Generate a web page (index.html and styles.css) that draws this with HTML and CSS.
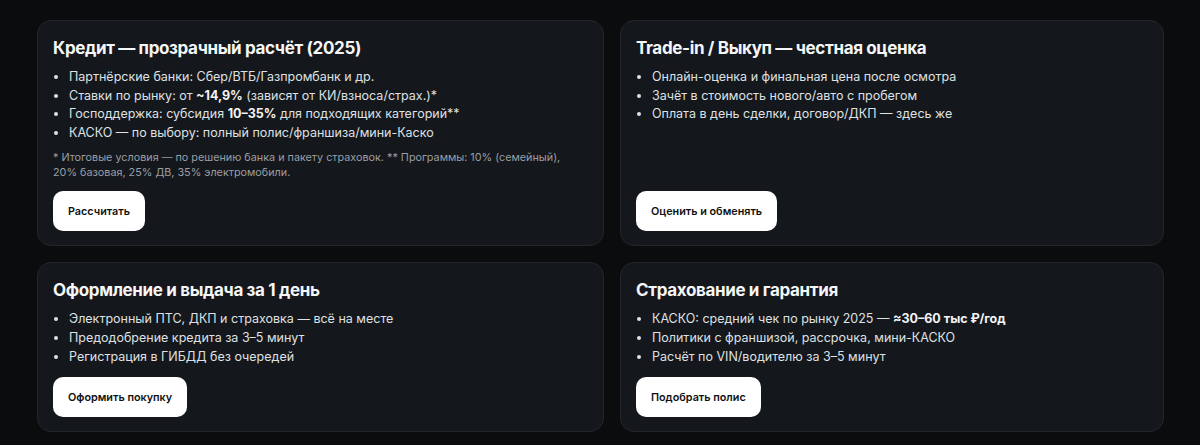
FILE: index.html
```html
<!DOCTYPE html>
<html lang="ru">
<head>
<meta charset="utf-8">
<link rel="stylesheet" href="styles.css">
</head>
<body>
<div class="grid">
  <section class="card">
    <div class="body">
      <h3 class="title">Кредит — прозрачный расчёт (2025)</h3>
      <ul class="list">
        <li>Партнёрские банки: Сбер/ВТБ/Газпромбанк и др.</li>
        <li>Ставки по рынку: от <b>~14,9%</b> (зависят от КИ/взноса/страх.)*</li>
        <li>Господдержка: субсидия <b>10–35%</b> для подходящих категорий**</li>
        <li>КАСКО — по выбору: полный полис/франшиза/мини-Каско</li>
      </ul>
      <p class="note">* Итоговые условия — по решению банка и пакету страховок. ** Программы: 10% (семейный), 20% базовая, 25% ДВ, 35% электромобили.</p>
    </div>
    <button class="btn">Рассчитать</button>
  </section>
  <section class="card">
    <div class="body">
      <h3 class="title">Trade-in / Выкуп — честная оценка</h3>
      <ul class="list">
        <li>Онлайн-оценка и финальная цена после осмотра</li>
        <li>Зачёт в стоимость нового/авто с пробегом</li>
        <li>Оплата в день сделки, договор/ДКП — здесь же</li>
      </ul>
    </div>
    <button class="btn">Оценить и обменять</button>
  </section>
  <section class="card">
    <div class="body">
      <h3 class="title">Оформление и выдача за 1 день</h3>
      <ul class="list">
        <li>Электронный ПТС, ДКП и страховка — всё на месте</li>
        <li>Предодобрение кредита за 3–5 минут</li>
        <li>Регистрация в ГИБДД без очередей</li>
      </ul>
    </div>
    <button class="btn">Оформить покупку</button>
  </section>
  <section class="card">
    <div class="body">
      <h3 class="title">Страхование и гарантия</h3>
      <ul class="list">
        <li>КАСКО: средний чек по рынку 2025 — <b>≈30–60 тыс ₽/год</b></li>
        <li>Политики с франшизой, рассрочка, мини-КАСКО</li>
        <li>Расчёт по VIN/водителю за 3–5 минут</li>
      </ul>
    </div>
    <button class="btn">Подобрать полис</button>
  </section>
</div>
</body>
</html>
```
FILE: styles.css
```css
* { box-sizing: border-box; }
html, body {
  margin: 0;
  background: #0b0c0e;
  font-family: Inter, "Noto Sans", sans-serif;
  color: #e6e8eb;
}
.grid {
  display: grid;
  grid-template-columns: 567fr 544fr;
  gap: 16px;
  padding: 20px 36px 14px 37px;
}
.card {
  background: #14171b;
  border: 1px solid #22262b;
  border-radius: 14px;
  padding: 15px 15px 14px;
  display: flex;
  flex-direction: column;
  align-items: flex-start;
}
.body {
  flex: 1;
  margin-bottom: 11px;
}
.title {
  margin: 0 0 8px;
  font-size: 17px;
  line-height: 24px;
  font-weight: 700;
  color: #f5f6f7;
  letter-spacing: -0.35px;
}
.list {
  margin: 0;
  padding: 0 0 0 16px;
  font-size: 12.5px;
  line-height: 18.6px;
  color: #dfe1e4;
}
.list b { font-weight: 700; color: #f3f4f5; }
.note {
  margin: 8px 0 0;
  font-size: 10.8px;
  line-height: 15px;
  color: #9a9ea5;
  max-width: 525px;
}
.btn {
  flex: none;
  height: 40px;
  padding: 0 15px;
  border: none;
  border-radius: 10px;
  background: #ffffff;
  color: #111;
  font-family: inherit;
  font-size: 10.8px;
  font-weight: 600;
}
```
